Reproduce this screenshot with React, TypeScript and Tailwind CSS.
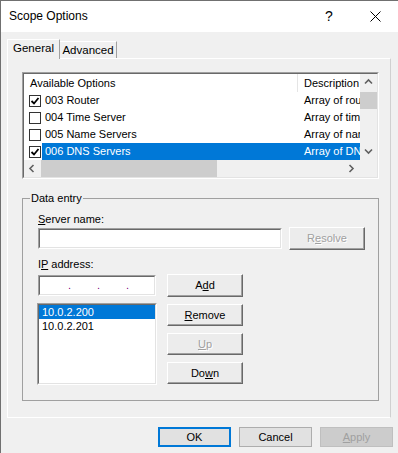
import React from "react";

const rows = [
  { code: "003 Router", desc: "Array of router addresses", checked: true, selected: false },
  { code: "004 Time Server", desc: "Array of time server addresses", checked: false, selected: false },
  { code: "005 Name Servers", desc: "Array of name servers", checked: false, selected: false },
  { code: "006 DNS Servers", desc: "Array of DNS servers", checked: true, selected: true },
];

function Chevron({ dir }: { dir: "up" | "down" | "left" | "right" }) {
  const d = {
    up: "M1 5.5 L4.5 2 L8 5.5",
    down: "M1 2.5 L4.5 6 L8 2.5",
    left: "M5.5 1 L2 4.5 L5.5 8",
    right: "M2.5 1 L6 4.5 L2.5 8",
  }[dir];
  return (
    <svg width="9" height="9" viewBox="0 0 9 9">
      <path d={d} fill="none" stroke="#606060" strokeWidth="1.6" />
    </svg>
  );
}

// classic 3D sunken edge (text boxes, list boxes)
function Sunken({ className, children }: { className: string; children?: React.ReactNode }) {
  return (
    <div className={`shrink-0 border border-t-[#a0a0a0] border-l-[#a0a0a0] border-b-white border-r-white ${className}`}>
      <div className="h-full w-full border border-t-[#696969] border-l-[#696969] border-b-[#e3e3e3] border-r-[#e3e3e3] bg-white overflow-hidden">
        {children}
      </div>
    </div>
  );
}

function ClassicButton({ children, disabled, className }: { children: React.ReactNode; disabled?: boolean; className: string }) {
  return (
    <div
      className={`shrink-0 flex items-center justify-center bg-[#ececec] border border-t-white border-l-white border-b-[#696969] border-r-[#696969] shadow-[inset_-1px_-1px_0_#a0a0a0] ${
        disabled ? "text-[#a0a0a0] [text-shadow:1px_1px_0_#fff]" : "text-black"
      } ${className}`}
    >
      {children}
    </div>
  );
}

function Checkbox({ checked }: { checked: boolean }) {
  return (
    <div className="shrink-0 w-[12px] h-[12px] border border-[#333] bg-white flex items-center justify-center">
      {checked && (
        <svg width="10" height="10" viewBox="0 0 10 10">
          <path d="M1.5 5 L4 7.5 L8.5 2" fill="none" stroke="#000" strokeWidth="1.8" />
        </svg>
      )}
    </div>
  );
}

export default function App() {
  return (
    <div className="w-[398px] h-[453px] overflow-hidden bg-[#f0f0f0] border-l border-t border-[#707070] font-['Liberation_Sans',Arial,sans-serif] text-[11px] leading-[13px] text-black">
      {/* Title bar */}
      <div className="h-[31px] bg-white flex items-center">
        <div className="pl-[8px] text-[12px] flex-1">Scope Options</div>
        <div className="w-[46px] h-full flex items-center justify-center text-[14px]">?</div>
        <div className="w-[46px] h-full flex items-center justify-center">
          <svg width="11" height="11" viewBox="0 0 11 11">
            <path d="M0.5 0.5 L10.5 10.5 M10.5 0.5 L0.5 10.5" stroke="#000" strokeWidth="1" />
          </svg>
        </div>
      </div>

      <div className="pl-[6px] pt-[7px]">
        {/* Tabs */}
        <div className="flex items-end h-[19px]">
          <div className="relative z-10 -mb-px h-[20px] w-[53px] bg-[#f0f0f0] border-l border-t border-r border-l-white border-t-white border-r-[#a0a0a0] flex items-center justify-center pb-[2px] text-[11.5px]">
            General
          </div>
          <div className="h-[17px] w-[57px] border-t border-r border-t-white border-r-[#a0a0a0] flex items-center justify-center text-[11.5px]">
            Advanced
          </div>
        </div>

        {/* Tab panel */}
        <div className="w-[384px] h-[360px] border border-white border-r-[#d0d0d0] pl-[14px] pt-[13px]">
          {/* List view */}
          <Sunken className="w-[357px] h-[107px]">
            <div className="flex h-[103px]">
              <div className="w-[336px] shrink-0 flex flex-col">
                <div className="h-[86px] bg-white overflow-hidden">
                  <div className="flex h-[18px] items-center">
                    <div className="w-[274px] shrink-0 h-full pl-[6px] border-r border-[#e5e5e5] flex items-center">Available Options</div>
                    <div className="flex-1 min-w-0 h-full pl-[6px] flex items-center whitespace-nowrap overflow-hidden">Description</div>
                  </div>
                  {rows.map((r) => (
                    <div key={r.code} className="flex h-[17px] items-center pl-[5px]">
                      <Checkbox checked={r.checked} />
                      <div className={`ml-[1px] flex flex-1 min-w-0 h-full items-center ${r.selected ? "bg-[#0078d7] text-white" : ""}`}>
                        <div className="w-[256px] shrink-0 pl-[3px] whitespace-nowrap">{r.code}</div>
                        <div className="flex-1 min-w-0 pl-[6px] whitespace-nowrap overflow-hidden">{r.desc}</div>
                      </div>
                    </div>
                  ))}
                </div>
                {/* horizontal scrollbar */}
                <div className="h-[17px] flex bg-[#f0f0f0]">
                  <div className="w-[17px] flex items-center justify-center">
                    <Chevron dir="left" />
                  </div>
                  <div className="w-[176px] bg-[#cdcdcd]" />
                  <div className="flex-1" />
                  <div className="w-[17px] flex items-center justify-center">
                    <Chevron dir="right" />
                  </div>
                </div>
              </div>
              {/* vertical scrollbar */}
              <div className="w-[17px] shrink-0 flex flex-col bg-[#f0f0f0]">
                <div className="h-[17px] flex items-center justify-center">
                  <Chevron dir="up" />
                </div>
                <div className="h-[17px] mt-px bg-[#cdcdcd]" />
                <div className="flex-1" />
                <div className="h-[17px] flex items-center justify-center mb-[17px]">
                  <Chevron dir="down" />
                </div>
              </div>
            </div>
          </Sunken>

          {/* Data entry group */}
          <fieldset className="mt-[13px] w-[357px] border border-[#a0a0a0] pl-[15px] pb-[15px] pt-[8px]">
            <legend className="ml-[-8px] px-[1px]">Data entry</legend>
            <div>
              <span className="underline">S</span>erver name:
            </div>
            <div className="flex items-center mt-[1px]">
              <Sunken className="w-[244px] h-[21px]" />
              <ClassicButton disabled className="ml-[7px] w-[76px] h-[23px]">
                R<span className="underline">e</span>solve
              </ClassicButton>
            </div>
            <div className="mt-[8px]">
              I<span className="underline">P</span> address:
            </div>
            <div className="flex items-start mt-[3px] gap-[10px]">
              <div className="w-[119px] shrink-0 flex flex-col">
                <Sunken className="w-[118px] h-[21px] mt-px">
                  <div className="flex h-full items-center pl-[2px] text-[#800080]">
                    <div className="w-[26px] shrink-0" />
                    <span className="w-[3px]">.</span>
                    <div className="w-[26px] shrink-0" />
                    <span className="w-[3px]">.</span>
                    <div className="w-[26px] shrink-0" />
                    <span className="w-[3px]">.</span>
                  </div>
                </Sunken>
                <Sunken className="mt-[7px] -ml-px w-[120px] h-[82px]">
                  <div className="h-[14px] bg-[#0078d7] text-white flex items-center pl-[3px]">10.0.2.200</div>
                  <div className="h-[14px] flex items-center pl-[3px]">10.0.2.201</div>
                </Sunken>
              </div>
              <div className="flex flex-col">
                <ClassicButton className="w-[76px] h-[23px]">
                  A<span className="underline">d</span>d
                </ClassicButton>
                <ClassicButton className="mt-[7px] w-[76px] h-[22px]">
                  <span className="underline">R</span>emove
                </ClassicButton>
                <ClassicButton disabled className="mt-[7px] w-[76px] h-[22px]">
                  <span className="underline">U</span>p
                </ClassicButton>
                <ClassicButton className="mt-[7px] w-[76px] h-[22px]">
                  Do<span className="underline">w</span>n
                </ClassicButton>
              </div>
            </div>
          </fieldset>
        </div>
      </div>

      {/* Dialog buttons */}
      <div className="flex justify-end gap-[8px] pr-[5px] mt-[9px]">
        <div className="w-[73px] h-[20px] border-2 border-[#0078d7] bg-[#e1e1e1] flex items-center justify-center">OK</div>
        <div className="w-[73px] h-[20px] border border-[#adadad] bg-[#e1e1e1] flex items-center justify-center">Cancel</div>
        <div className="w-[73px] h-[20px] border border-[#bfbfbf] bg-[#cccccc] text-[#a0a0a0] flex items-center justify-center">
          <span className="underline">A</span>pply
        </div>
      </div>
    </div>
  );
}
